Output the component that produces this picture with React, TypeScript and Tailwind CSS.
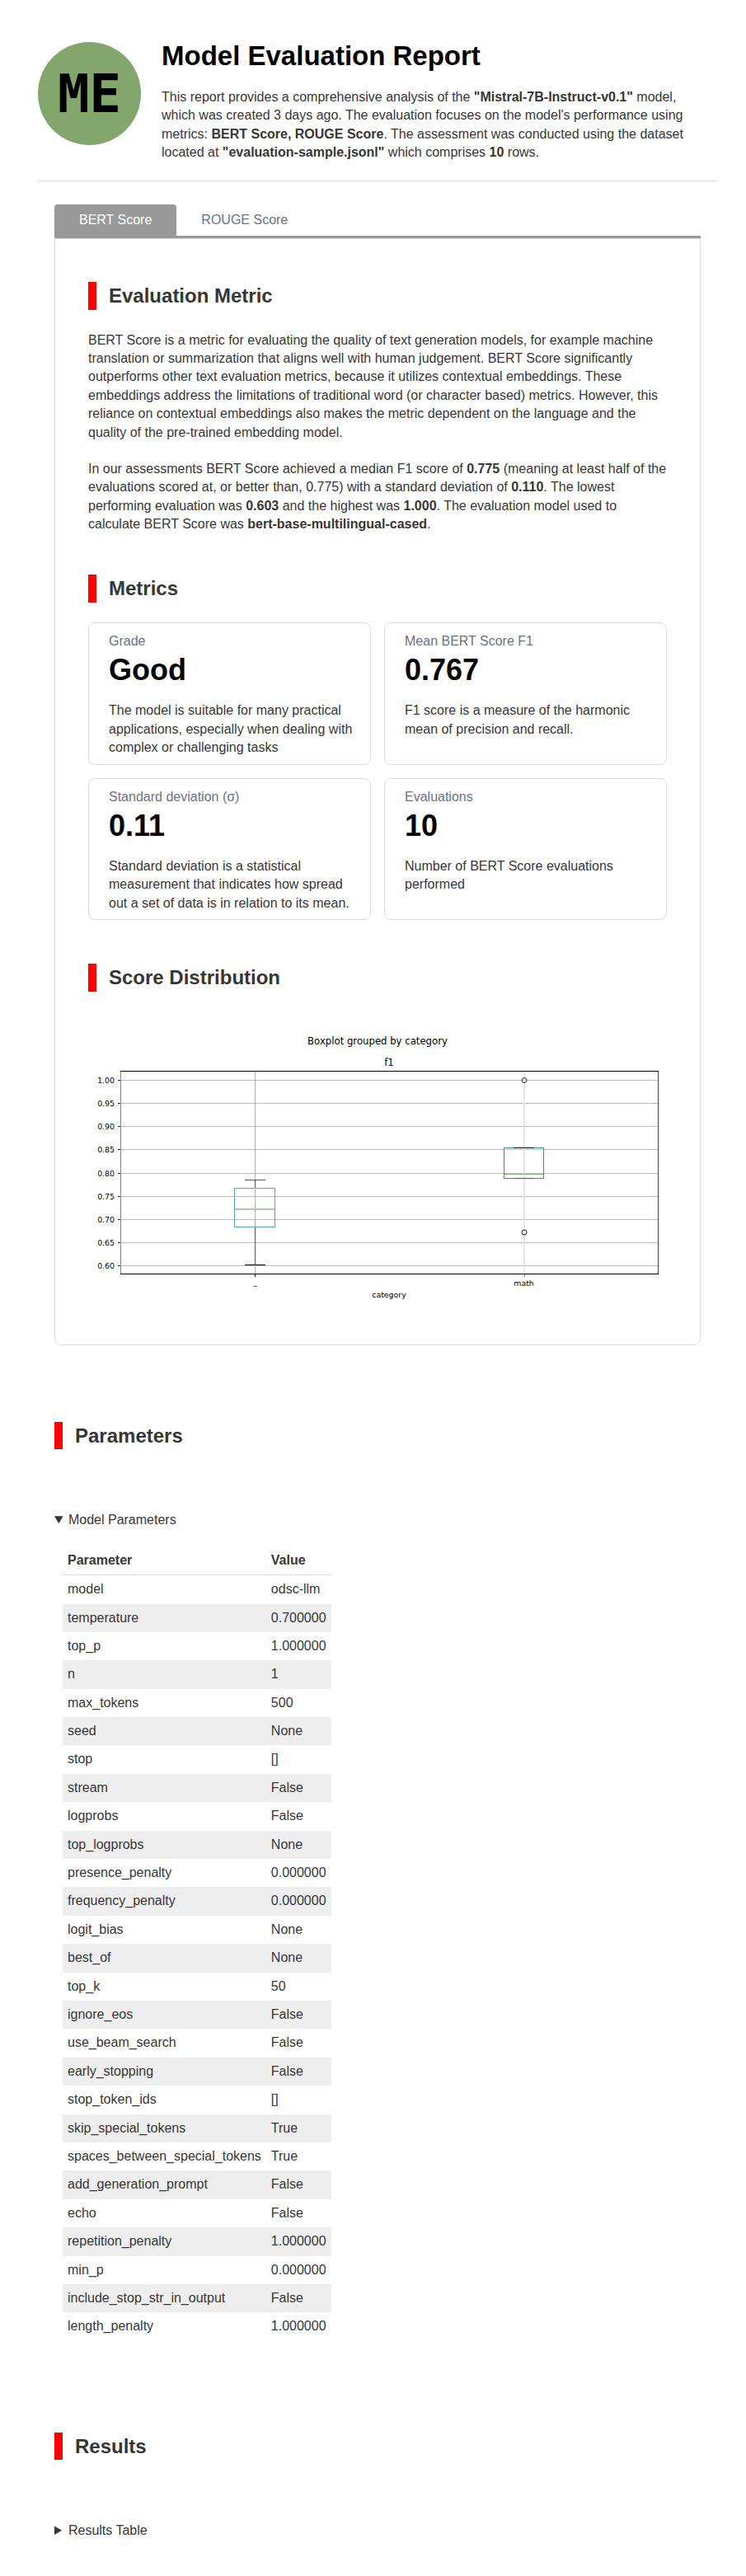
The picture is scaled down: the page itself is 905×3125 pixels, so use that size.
import { useState, type ReactNode } from "react";

const tabs = ["BERT Score", "ROUGE Score"];

const metrics = [
  {
    label: "Grade",
    value: "Good",
    text: "The model is suitable for many practical applications, especially when dealing with complex or challenging tasks",
  },
  {
    label: "Mean BERT Score F1",
    value: "0.767",
    text: "F1 score is a measure of the harmonic mean of precision and recall.",
  },
  {
    label: "Standard deviation (σ)",
    value: "0.11",
    text: "Standard deviation is a statistical measurement that indicates how spread out a set of data is in relation to its mean.",
  },
  {
    label: "Evaluations",
    value: "10",
    text: "Number of BERT Score evaluations performed",
  },
];

const parameters: [string, string][] = [
  ["model", "odsc-llm"],
  ["temperature", "0.700000"],
  ["top_p", "1.000000"],
  ["n", "1"],
  ["max_tokens", "500"],
  ["seed", "None"],
  ["stop", "[]"],
  ["stream", "False"],
  ["logprobs", "False"],
  ["top_logprobs", "None"],
  ["presence_penalty", "0.000000"],
  ["frequency_penalty", "0.000000"],
  ["logit_bias", "None"],
  ["best_of", "None"],
  ["top_k", "50"],
  ["ignore_eos", "False"],
  ["use_beam_search", "False"],
  ["early_stopping", "False"],
  ["stop_token_ids", "[]"],
  ["skip_special_tokens", "True"],
  ["spaces_between_special_tokens", "True"],
  ["add_generation_prompt", "False"],
  ["echo", "False"],
  ["repetition_penalty", "1.000000"],
  ["min_p", "0.000000"],
  ["include_stop_str_in_output", "False"],
  ["length_penalty", "1.000000"],
];

function SectionTitle({ children }: { children: ReactNode }) {
  return (
    <h2 className="border-l-10 border-[#ff0000] pl-[15px] text-2xl leading-[1.4] font-bold">
      {children}
    </h2>
  );
}

function MetricCard({ label, value, text }: { label: string; value: string; text: string }) {
  return (
    <div className="rounded-lg border border-[#dbdbdb] pt-[11px] pr-3 pb-2 pl-6">
      <p className="text-[#6b7280]">{label}</p>
      <p className="text-4xl leading-12 font-bold text-black">{value}</p>
      <p className="mt-[14px]">{text}</p>
    </div>
  );
}

const scoreTicks = [
  { label: "1.00", y: 67 },
  { label: "0.95", y: 95 },
  { label: "0.90", y: 123 },
  { label: "0.85", y: 151 },
  { label: "0.80", y: 180 },
  { label: "0.75", y: 208 },
  { label: "0.70", y: 236 },
  { label: "0.65", y: 264 },
  { label: "0.60", y: 292 },
];

function Boxplot() {
  return (
    <svg
      viewBox="0 0 702 351"
      className="block w-full"
      role="img"
      aria-label="Boxplot grouped by category"
      fontFamily="'DejaVu Sans', sans-serif"
      fill="#000"
    >
      <text x="351" y="24" fontSize="11.7" textAnchor="middle">Boxplot grouped by category</text>
      <text x="365" y="50" fontSize="11.7" textAnchor="middle">f1</text>

      {scoreTicks.map((t) => (
        <text key={t.label} x="32" y={t.y + 4} fontSize="9.4" textAnchor="end">{t.label}</text>
      ))}

      <g fill="none" shapeRendering="crispEdges">
        {scoreTicks.map((t) => (
          <g key={t.label}>
            <path d={`M39 ${t.y + 0.5}h652`} stroke="#bcbcbc" />
            <path d={`M36 ${t.y + 0.5}h3`} stroke="#222" />
          </g>
        ))}
        <path d="M202.500 56v247" stroke="#b0b0b0" />
        <path d="M528 56h2v247h-2z" fill="#e4e4e4" />
        <path d="M202.500 303v3" stroke="#000" />
        <path d="M529.500 303v3" stroke="#777" />

        <path d="M202.500 189v9M202.500 246v46" stroke="#008080" />
        <path d="M177.500 198.500h49v47h-49z" stroke="#4fa9a9" />
        <path d="M504.500 149.500h48v37h-48z" stroke="#2f9494" />
        <path d="M178 223h48v2h-48z" fill="#a3d1a1" />
        <path d="M505 181.500h47" stroke="#7dba78" />
        <path d="M190 188.500h25M516 186.500h25" stroke="#555" />
        <path d="M190 291.500h25M516 149.500h25" stroke="#000" />

        <path d="M39.500 56v247" stroke="#888" />
        <path d="M691.500 56v247" stroke="#444" />
        <path d="M39 56.500h653M39 302.500h653" stroke="#000" />
      </g>

      <g fill="none" stroke="#222">
        <circle cx="529" cy="67.500" r="3" />
        <circle cx="529" cy="252" r="3" />
      </g>

      <text x="202.500" y="316" fontSize="9.4" textAnchor="middle">_</text>
      <text x="528.500" y="317" fontSize="9.4" textAnchor="middle">math</text>
      <text x="365" y="331" fontSize="9.4" textAnchor="middle">category</text>
    </svg>
  );
}

export default function App() {
  const [active, setActive] = useState(tabs[0]);

  return (
    <div className="bg-white pt-[51px] pr-[35px] pb-10 pl-[46px] font-['Liberation_Sans',Arial,sans-serif] text-base leading-[1.4] text-[#363636]">
      <header className="flex gap-[25px] border-b border-[#dbdbdb] pb-[22px]">
        <div className="flex size-[125px] shrink-0 items-center justify-center rounded-full bg-[#82a66c] font-['DejaVu_Sans_Mono',monospace] text-[64px] leading-none font-bold text-black">
          ME
        </div>
        <div className="flex-1 pr-5">
          <h1 className="text-[33px] leading-[34px] font-bold text-black">Model Evaluation Report</h1>
          <p className="mt-[22px]">
            This report provides a comprehensive analysis of the <b>"Mistral-7B-Instruct-v0.1"</b> model, which was
            created 3 days ago. The evaluation focuses on the model's performance using metrics:{" "}
            <b>BERT Score, ROUGE Score</b>. The assessment was conducted using the dataset located at{" "}
            <b>"evaluation-sample.jsonl"</b> which comprises <b>10</b> rows.
          </p>
        </div>
      </header>

      <main className="px-5 pt-7">
        <div role="tablist" className="flex border-b-3 border-[#999999]">
          {tabs.map((tab) => (
            <button
              key={tab}
              role="tab"
              type="button"
              aria-selected={tab === active}
              onClick={() => setActive(tab)}
              className={
                tab === active
                  ? "rounded-t bg-[#999999] px-[30px] py-2 text-white"
                  : "px-[30px] py-2 text-[#6b7280]"
              }
            >
              {tab}
            </button>
          ))}
        </div>

        <div role="tabpanel" className="rounded-b-lg border border-[#dbdbdb] px-10 pt-[52px] pb-[37px]">
          <SectionTitle>Evaluation Metric</SectionTitle>
          <p className="mt-[26px]">
            BERT Score is a metric for evaluating the quality of text generation models, for example machine translation
            or summarization that aligns well with human judgement. BERT Score significantly outperforms other text
            evaluation metrics, because it utilizes contextual embeddings. These embeddings address the limitations of
            traditional word (or character based) metrics. However, this reliance on contextual embeddings also makes the
            metric dependent on the language and the quality of the pre-trained embedding model.
          </p>
          <p className="mt-[22px]">
            In our assessments BERT Score achieved a median F1 score of <b>0.775</b> (meaning at least half of the
            evaluations scored at, or better than, 0.775) with a standard deviation of <b>0.110</b>. The lowest
            performing evaluation was <b>0.603</b> and the highest was <b>1.000</b>. The evaluation model used to
            calculate BERT Score was <b>bert-base-multilingual-cased</b>.
          </p>

          <div className="mt-[50px]">
            <SectionTitle>Metrics</SectionTitle>
          </div>
          <div className="mt-6 grid grid-cols-2 gap-4">
            {metrics.map((m) => (
              <MetricCard key={m.label} {...m} />
            ))}
          </div>

          <div className="mt-[53px]">
            <SectionTitle>Score Distribution</SectionTitle>
          </div>
          <div className="mt-10">
            <Boxplot />
          </div>
        </div>

        <section className="mt-[93px]">
          <SectionTitle>Parameters</SectionTitle>
          <details open className="mt-[75px]">
            <summary>Model Parameters</summary>
            <table className="mt-5 ml-[10px] text-left">
              <thead>
                <tr className="border-b border-[#dbdbdb]">
                  <th className="p-1.5">Parameter</th>
                  <th className="p-1.5">Value</th>
                </tr>
              </thead>
              <tbody>
                {parameters.map(([name, value]) => (
                  <tr key={name} className="even:bg-[#eeeeee]">
                    <td className="p-1.5">{name}</td>
                    <td className="p-1.5">{value}</td>
                  </tr>
                ))}
              </tbody>
            </table>
          </details>
        </section>

        <section className="mt-[111px]">
          <SectionTitle>Results</SectionTitle>
          <details className="mt-[75px]">
            <summary>Results Table</summary>
            <p className="mt-5">10 rows</p>
          </details>
        </section>
      </main>
    </div>
  );
}
